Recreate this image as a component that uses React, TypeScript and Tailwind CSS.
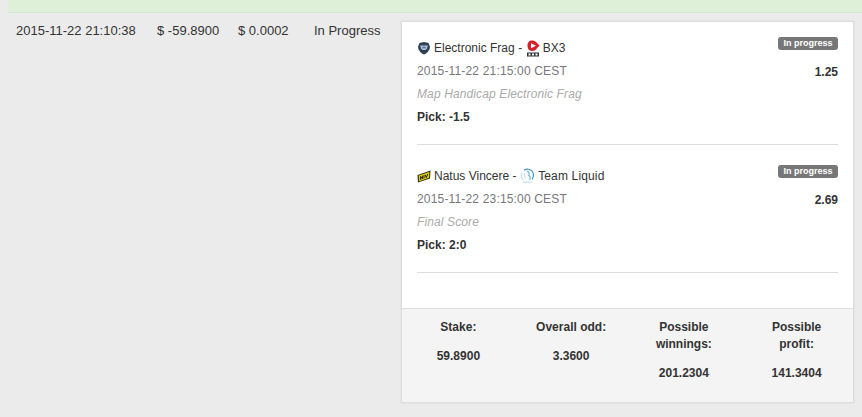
const font = { fontFamily: '"Liberation Sans", Arial, sans-serif' };

function EfLogo() {
  return (
    <svg width="14" height="14" viewBox="0 0 14 14" className="shrink-0">
      <path d="M7 1 L11.5 2 L13 6 C12.5 10 9.5 12.5 7 13.5 C4.5 12.5 1.5 10 1 6 L2.5 2 Z" fill="#2d3f52" />
      <path d="M3.2 4.5 H10.8 L10 7.6 C9 9.6 5 9.6 4 7.6 Z" fill="#b4c6d6" />
      <path d="M5.3 5.6 H8.7 V7.4 H5.3 Z" fill="#5f7c97" />
    </svg>
  );
}

function BxLogo() {
  return (
    <svg width="14" height="17" viewBox="0 0 14 17" className="shrink-0">
      <path d="M3.5 1 C6 0.3 8 0.6 9.5 1.5 L13.5 5.5 L9.5 10 C7.5 11.2 5 11.2 3.5 10.3 C0.8 8.5 0.8 3 3.5 1 Z" fill="#d4202c" />
      <path d="M5 3.2 L10 5.7 L5 8.2 Z" fill="#ffffff" />
      <rect x="1" y="12.5" width="12" height="4" fill="#333333" />
      <rect x="2.5" y="13.5" width="2" height="2" fill="#ffffff" />
      <rect x="6" y="13.5" width="2" height="2" fill="#ffffff" />
      <rect x="9.5" y="13.5" width="2" height="2" fill="#ffffff" />
    </svg>
  );
}

function NaviLogo() {
  return (
    <svg width="14" height="14" viewBox="0 0 14 14" className="shrink-0">
      <path d="M0.5 6 L13.5 1.5 L13 9.5 L1 13.5 Z" fill="#33330f" />
      <path d="M1.8 6.6 L12.4 3 L12 8.8 L2.2 12.2 Z" fill="#e3d312" />
      <path d="M3.6 10.8 V7.4 L5.6 10 V6.7 M7 9.4 V6.1 M8.2 5.8 L9.3 8.7 L10.8 4.9" stroke="#23230f" strokeWidth="1" fill="none" />
    </svg>
  );
}

function LiquidLogo() {
  return (
    <svg width="15" height="16" viewBox="0 0 15 16" className="shrink-0">
      <path d="M4 2.2 C6.5 0.5 10.5 1 12.3 3.5 C14 6 13.6 9 12 11.5" stroke="#4a94ba" strokeWidth="1.2" fill="none" />
      <path d="M7 3 C9 4 9.8 6 8.8 7.5 C10.2 8 10.6 10 9.6 12" stroke="#7fc1dd" strokeWidth="1.4" fill="none" />
      <path d="M2 4.5 C0.8 7 1.5 10 3.5 12 M4.5 5 C4 7 4.5 9 6 10.5" stroke="#c4e2ef" strokeWidth="1.2" fill="none" />
      <rect x="3" y="13.5" width="9" height="1.5" fill="#d2e3ec" />
    </svg>
  );
}

function Bet({ left, right, date, market, pick, odd }: { left: React.ReactNode; right: React.ReactNode; date: string; market: string; pick: string; odd: string }) {
  return (
    <div className="border-b border-[#dddddd] pb-[16px] mb-[20px] h-[108px] flex justify-between">
      <div className="flex flex-col">
        <div className="h-[23px] flex items-center text-[#333333]">{left}<span className="whitespace-pre tracking-[0.1px]"> - </span>{right}</div>
        <div className="h-[23px] flex items-center text-[#777777] tracking-[0.17px]">{date}</div>
        <div className="h-[23px] flex items-center italic text-[#aaaaaa] tracking-[0.12px]">{market}</div>
        <div className="h-[23px] flex items-center font-bold text-[#333333]">{pick}</div>
      </div>
      <div className="flex flex-col items-end">
        <span className="h-[13px] w-[60px] rounded-[3px] bg-[#777777] text-white text-[9px] font-bold leading-[13px] text-center">In progress</span>
        <span className="mt-[14px] font-bold text-[#333333] leading-[17px]">{odd}</span>
      </div>
    </div>
  );
}

function Stat({ label, value }: { label: React.ReactNode; value: string }) {
  return (
    <div className="flex flex-col items-center text-center font-bold text-[#333333] leading-[17px]">
      <div>{label}</div>
      <div className="mt-[12px]">{value}</div>
    </div>
  );
}

export default function App() {
  return (
    <div className="w-[862px] h-[417px] overflow-hidden bg-[#ebebeb] text-[12px]" style={font}>
      <div className="ml-[8px] h-[13px] bg-[#dff0d8] border-b border-[#d6e5cf]" />
      <div className="flex items-start pt-[8px]">
        <div className="flex w-[401px] shrink-0 pl-[16px] pt-[1px] leading-[17px] text-[13px] text-[#333333]">
          <span className="w-[141px]">2015-11-22 21:10:38</span>
          <span className="w-[81px]">$ -59.8900</span>
          <span className="w-[76px]">$ 0.0002</span>
          <span>In Progress</span>
        </div>
        <div className="w-[453px] h-[382px] bg-white border border-[#dddddd] flex flex-col shadow-[0_0_2px_rgba(0,0,0,0.08)]">
          <div className="flex-1 pt-[15px] px-[15px]">
            <Bet
              left={<span className="flex items-center gap-[3px]"><EfLogo />Electronic Frag</span>}
              right={<span className="flex items-center gap-[3px]"><BxLogo />BX3</span>}
              date="2015-11-22 21:15:00 CEST"
              market="Map Handicap Electronic Frag"
              pick="Pick: -1.5"
              odd="1.25"
            />
            <Bet
              left={<span className="flex items-center gap-[3px]"><NaviLogo />Natus Vincere</span>}
              right={<span className="flex items-center gap-[3px] tracking-[0.15px]"><LiquidLogo />Team Liquid</span>}
              date="2015-11-22 23:15:00 CEST"
              market="Final Score"
              pick="Pick: 2:0"
              odd="2.69"
            />
          </div>
          <div className="h-[94px] bg-[#f4f4f4] border-t border-[#dddddd] grid grid-cols-4 pt-[10px]">
            <Stat label="Stake:" value="59.8900" />
            <Stat label="Overall odd:" value="3.3600" />
            <Stat label={<>Possible<br />winnings:</>} value="201.2304" />
            <Stat label={<>Possible<br />profit:</>} value="141.3404" />
          </div>
        </div>
      </div>
    </div>
  );
}
